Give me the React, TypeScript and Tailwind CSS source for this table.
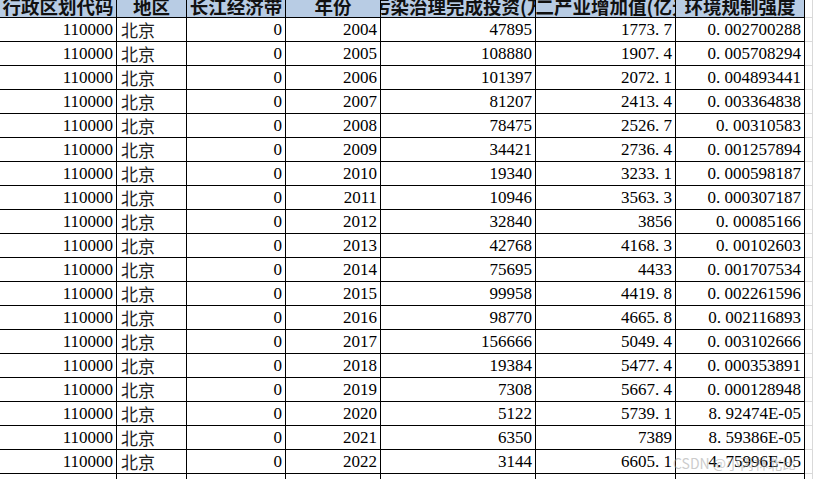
const rows: [string, string, string, string][] = [
  ['2004', '47895', '1773.7', '0.002700288'],
  ['2005', '108880', '1907.4', '0.005708294'],
  ['2006', '101397', '2072.1', '0.004893441'],
  ['2007', '81207', '2413.4', '0.003364838'],
  ['2008', '78475', '2526.7', '0.00310583'],
  ['2009', '34421', '2736.4', '0.001257894'],
  ['2010', '19340', '3233.1', '0.000598187'],
  ['2011', '10946', '3563.3', '0.000307187'],
  ['2012', '32840', '3856', '0.00085166'],
  ['2013', '42768', '4168.3', '0.00102603'],
  ['2014', '75695', '4433', '0.001707534'],
  ['2015', '99958', '4419.8', '0.002261596'],
  ['2016', '98770', '4665.8', '0.002116893'],
  ['2017', '156666', '5049.4', '0.003102666'],
  ['2018', '19384', '5477.4', '0.000353891'],
  ['2019', '7308', '5667.4', '0.000128948'],
  ['2020', '5122', '5739.1', '8.92474E-05'],
  ['2021', '6350', '7389', '8.59386E-05'],
  ['2022', '3144', '6605.1', '4.75996E-05'],
]

const cols = 'grid grid-cols-[117px_70px_99px_95px_155px_140px_129px_8px]'
const numFont = { fontFamily: '"Liberation Serif", "Noto Sans CJK SC", serif' }
const cjkFont = { fontFamily: '"Noto Sans CJK SC", sans-serif' }

// SimSun-style numbers: the period takes a half-width slot
function Num({ v }: { v: string }) {
  return (
    <span className="whitespace-nowrap">
      {v.split('').map((ch, i) =>
        ch === '.' ? (
          <span key={i} className="inline-block w-[8.5px] text-left">.</span>
        ) : (
          <span key={i}>{ch}</span>
        )
      )}
    </span>
  )
}

function HeadCell({ children, shift }: { children: string; shift?: string }) {
  return (
    <div className="h-[18px] overflow-hidden border-r border-b border-black bg-[#b8cce4] flex justify-center">
      <span
        className={`whitespace-nowrap text-[18.5px] font-bold leading-[18px] -mt-[3px] text-[#111] ${shift ?? ''}`}
        style={cjkFont}
      >
        {children}
      </span>
    </div>
  )
}

function HeadShifted({ children, offset }: { children: string; offset: string }) {
  return (
    <div className="h-[18px] overflow-hidden border-r border-b border-black bg-[#b8cce4] flex justify-start">
      <span
        className={`whitespace-nowrap text-[18.5px] font-bold leading-[18px] -mt-[3px] text-[#111] ${offset}`}
        style={cjkFont}
      >
        {children}
      </span>
    </div>
  )
}

function Cell({ children, left }: { children?: React.ReactNode; left?: boolean }) {
  return (
    <div
      className={`h-[24px] overflow-hidden border-r border-b border-black flex items-center text-[17px] text-black ${
        left ? 'justify-start pl-[4px]' : 'justify-end pr-[3px]'
      }`}
      style={numFont}
    >
      {children}
    </div>
  )
}

function Pad({ head }: { head?: boolean }) {
  return <div className={`${head ? 'h-[18px]' : 'h-[24px]'} border-r border-b border-[#d9d9d9] bg-white`} />
}

export default function App() {
  return (
    <div className="relative w-[813px] h-[479px] overflow-hidden bg-white">
      <div className={cols}>
        <HeadCell>行政区划代码</HeadCell>
        <HeadCell>地区</HeadCell>
        <HeadCell>长江经济带</HeadCell>
        <HeadCell>年份</HeadCell>
        <HeadShifted offset="ml-[-9px]">污染治理完成投资(万元)</HeadShifted>
        <HeadShifted offset="ml-[-19px]">第二产业增加值(亿元)</HeadShifted>
        <HeadCell>环境规制强度</HeadCell>
        <Pad head />

        {rows.map(([year, invest, added, intensity]) => (
          <div key={year} className="contents">
            <Cell>110000</Cell>
            <Cell left>
              <span className="text-[17px] text-[#222]" style={cjkFont}>北京</span>
            </Cell>
            <Cell>0</Cell>
            <Cell>{year}</Cell>
            <Cell><Num v={invest} /></Cell>
            <Cell><Num v={added} /></Cell>
            <Cell><Num v={intensity} /></Cell>
            <Pad />
          </div>
        ))}

        <Cell />
        <Cell />
        <Cell />
        <Cell />
        <Cell />
        <Cell />
        <Cell />
        <Pad />
      </div>

      <span
        className="absolute left-[673px] top-[453px] whitespace-nowrap text-[14px] text-[#9a9a9a] opacity-50"
        style={cjkFont}
      >
        CSDN @小丙林北比
      </span>
    </div>
  )
}
